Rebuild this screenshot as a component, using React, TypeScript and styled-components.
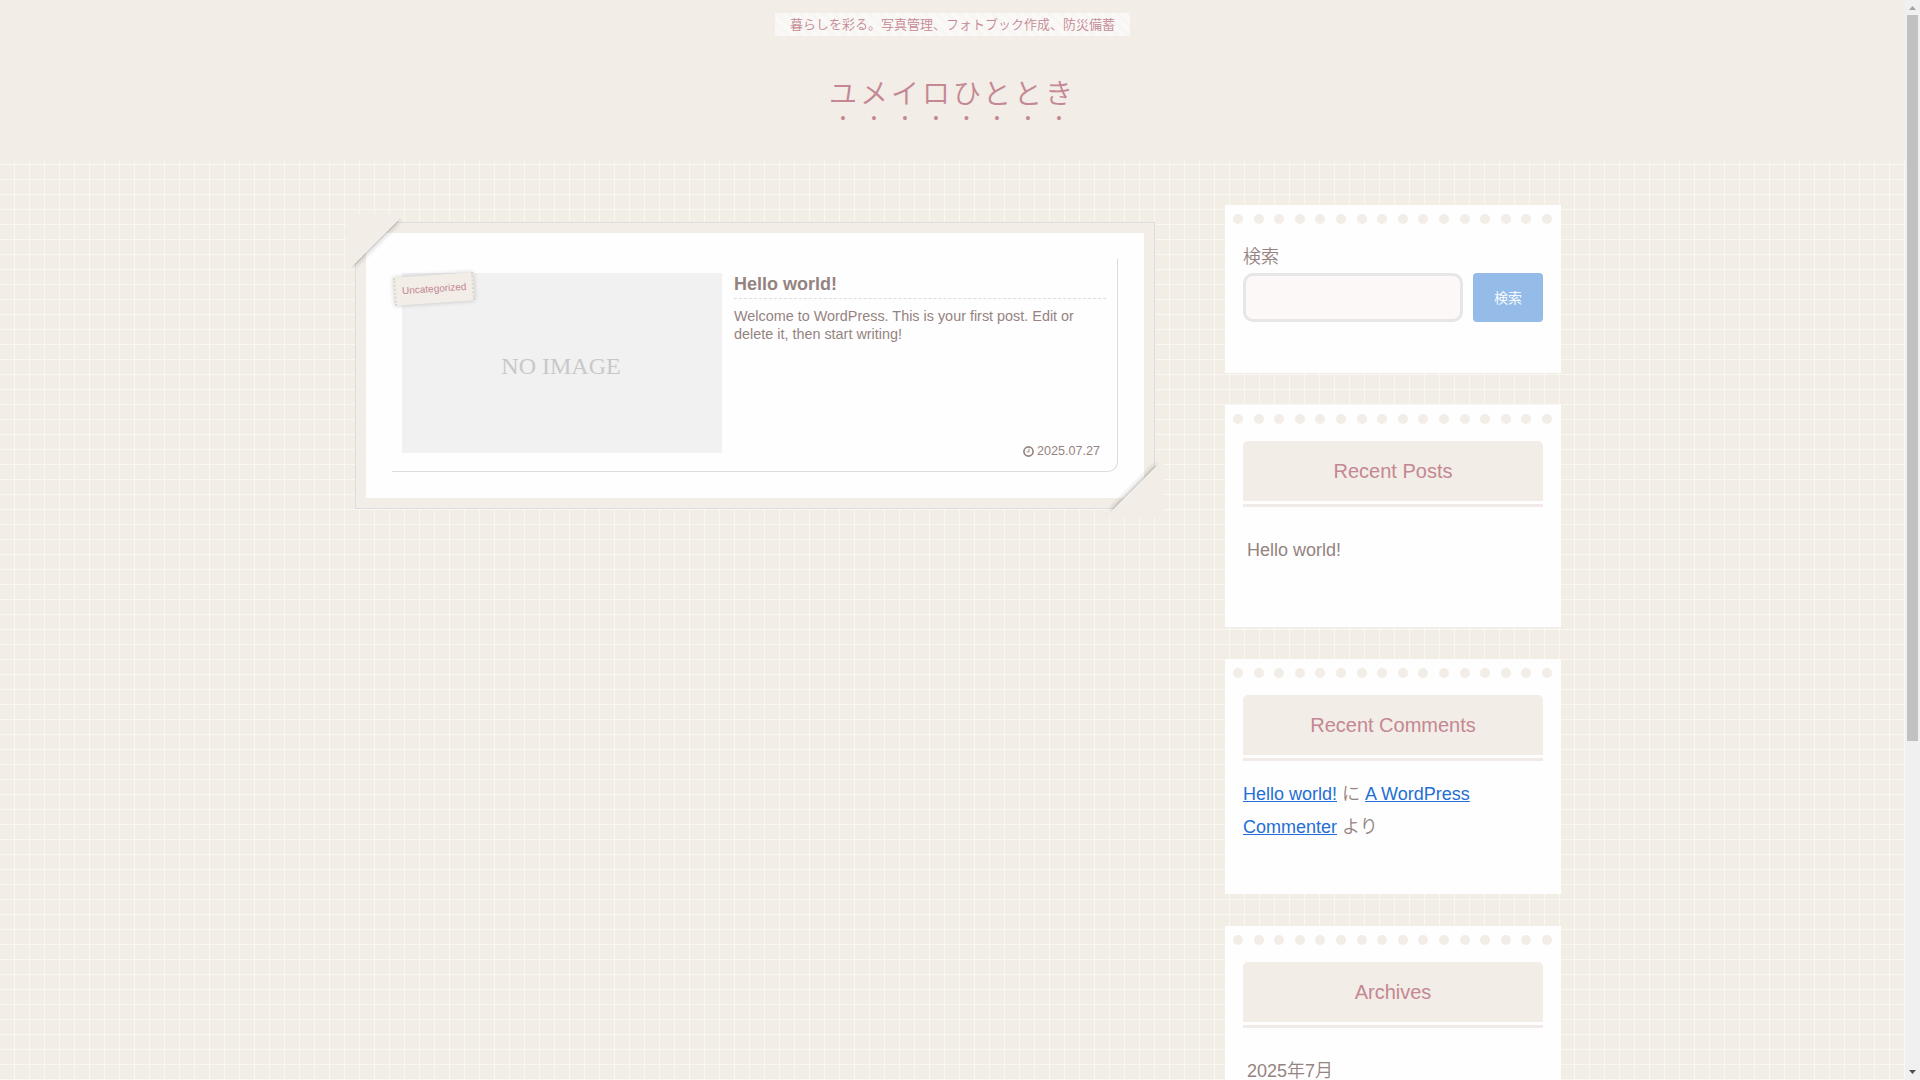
import React from "react";
import styled, { createGlobalStyle } from "styled-components";

const cream = "#f2ede6";
const rose = "#c48793";
const taupe = "#958380";
const line = "#dddddd";

const Global = createGlobalStyle`
  *, *::before, *::after { box-sizing: border-box; }
  body {
    margin: 0;
    color: ${taupe};
    font-family: "Liberation Sans", "Noto Sans CJK JP", sans-serif;
    font-size: 18px;
    font-weight: 350;
    line-height: 33px;
  }
  h1, h2, p, ul { margin: 0; padding: 0; }
  ul { list-style: none; }
`;

const Shell = styled.div`
  display: flex;
  height: 100vh;
  overflow: hidden;
`;

const Page = styled.div`
  flex: 1;
  min-width: 0;
  overflow: hidden;
  background-color: #f2ede5;
  background-image:
    linear-gradient(to right, transparent 14px, #f9f7f4 14px),
    linear-gradient(to bottom, transparent 14px, #f9f7f4 14px);
  background-size: 15px 15px;
`;

const Header = styled.header`
  display: flex;
  flex-direction: column;
  align-items: center;
  padding: 13px 0 35px;
  background: ${cream};
`;

const Tagline = styled.p`
  padding: 0 15px;
  font-size: 13px;
  line-height: 23px;
  color: ${rose};
  background: repeating-linear-gradient(45deg, #f8f6f3 0 4px, #faf9f8 4px 8px);
`;

const SiteName = styled.h1`
  margin-top: 32px;
  font-size: 28px;
  font-weight: 350;
  line-height: 54px;
  letter-spacing: 3px;
  a {
    color: ${rose};
    text-decoration: none;
    text-emphasis: filled dot;
    text-emphasis-position: under right;
  }
`;

const Content = styled.div`
  display: grid;
  grid-template-columns: minmax(0, 1fr) 336px;
  gap: 70px;
  align-items: start;
  max-width: 1217px;
  margin: 0 auto;
  padding: 44px 0;
`;

const Main = styled.main`
  padding: 17px 0 0 11px;
`;

const Frame = styled.div`
  position: relative;
  padding: 10px;
  border: 1px solid ${line};
  background: ${cream};
`;

const Corner = styled.span<{ $end?: boolean }>`
  position: absolute;
  width: 57px;
  height: 57px;
  ${(p) => (p.$end ? "right: -9px; bottom: -9px;" : "left: -9px; top: -9px;")}
  background: linear-gradient(${(p) => (p.$end ? "315deg" : "135deg")}, ${cream} 50%, transparent 50%);
  &::after {
    content: "";
    position: absolute;
    inset: 0;
    background: linear-gradient(
      ${(p) => (p.$end ? "315deg" : "135deg")},
      transparent 50%,
      rgba(0, 0, 0, 0.24) 50%,
      rgba(0, 0, 0, 0.08) 53%,
      transparent 58%
    );
    mask-image: linear-gradient(45deg, transparent 6%, #000 16%, #000 84%, transparent 94%);
  }
`;

const Sheet = styled.div`
  padding: 26px;
  background: #fefefe;
`;

const Entry = styled.article`
  display: grid;
  grid-template-columns: 320px minmax(0, 1fr);
  gap: 12px;
  padding: 14px 11px 18px 10px;
  border: solid ${line};
  border-width: 0 1px 1px 0;
  border-radius: 0 0 10px 0;
`;

const Thumb = styled.div`
  position: relative;
  display: flex;
  align-items: center;
  justify-content: center;
  aspect-ratio: 16 / 9;
  padding: 6px 2px 0 0;
  background: #f1f1f1;
  color: #c8c8ca;
  font: 24px/30px "Liberation Serif", serif;
`;

const Category = styled.span`
  position: absolute;
  left: -8px;
  top: 2px;
  padding: 0 6px;
  border: dotted #dcd6cf;
  border-width: 0 2px;
  background: ${cream};
  color: ${rose};
  font: 10px/28px "Liberation Sans", sans-serif;
  transform: rotate(-4deg);
  box-shadow: 0 0 5px rgba(0, 0, 0, 0.2);
`;

const Body = styled.div`
  display: flex;
  flex-direction: column;
`;

const EntryTitle = styled.h2`
  margin-bottom: 8px;
  padding-bottom: 3px;
  border-bottom: 1px dashed ${line};
  font-size: 18px;
  line-height: 22px;
  a { color: inherit; text-decoration: none; }
`;

const Excerpt = styled.p`
  font-size: 0.8em;
  line-height: 18px;
`;

const Meta = styled.div`
  display: flex;
  align-items: center;
  justify-content: flex-end;
  gap: 3px;
  margin-top: auto;
  padding-right: 6px;
  margin-bottom: -6px;
  font-size: 0.7em;
  line-height: 16px;
`;

const Sidebar = styled.aside`
  display: grid;
  grid-template-columns: minmax(0, 1fr);
  gap: 32px;
`;

const Card = styled.section<{ $end: number }>`
  padding: 9px 18px ${(p) => p.$end}px;
  background: #fefefe;
`;

const Dots = styled.div`
  display: flex;
  justify-content: space-between;
  margin: 0 -9px 17px -10px;
  span {
    width: 10px;
    height: 10px;
    border-radius: 50%;
    background: ${cream};
  }
`;

const CardTitle = styled.h2`
  border-bottom: 3px solid #f1eae7;
  padding-bottom: 3px;
  font-size: 20px;
  font-weight: 400;
  line-height: 60px;
  text-align: center;
  color: ${rose};
  span {
    display: block;
    border-radius: 5px 5px 0 0;
    background: ${cream};
  }
`;

const LinkList = styled.ul`
  padding: 27px 4px 0;
  a { color: inherit; text-decoration: none; }
`;

const Comment = styled.p`
  padding-top: 17px;
  a { color: #246ed5; }
`;

const SearchForm = styled.form`
  label { display: block; line-height: 32px; }
`;

const SearchRow = styled.div`
  display: flex;
  gap: 10px;
  height: 49px;
`;

const SearchInput = styled.input`
  flex: 1;
  min-width: 0;
  border: 3px solid #e6e6e6;
  border-radius: 10px;
  background: #fcf8f7;
  padding: 0 10px;
  font-size: 18px;
`;

const SearchButton = styled.button`
  width: 70px;
  padding: 0 0 2px;
  border: 0;
  border-radius: 4px;
  background: #95bce9;
  color: #fff;
  font: 350 14px "Liberation Sans", "Noto Sans CJK JP", sans-serif;
`;

const Track = styled.div`
  display: flex;
  flex-direction: column;
  align-items: center;
  width: 15px;
  background: #f0f0f0;
`;

const Arrow = styled.svg`
  flex: none;
  width: 15px;
  height: 15px;
`;

const ThumbBar = styled.div`
  width: 11px;
  height: 67.2%;
  margin-bottom: auto;
  background: #c1c1c1;
`;

const DotRow = () => (
  <Dots aria-hidden="true">
    {Array.from({ length: 16 }, (_, i) => <span key={i} />)}
  </Dots>
);

function Widget({ title, end, children }: { title?: string; end: number; children?: React.ReactNode }) {
  return (
    <Card $end={end}>
      <DotRow />
      {title && <CardTitle><span>{title}</span></CardTitle>}
      {children}
    </Card>
  );
}

export default function App() {
  return (
    <Shell lang="ja">
      <Global />
      <Page>
        <Header>
          <Tagline>暮らしを彩る。写真管理、フォトブック作成、防災備蓄</Tagline>
          <SiteName><a href="#">ユメイロひととき</a></SiteName>
        </Header>
        <Content>
          <Main>
            <Frame>
              <Sheet>
                <Entry>
                  <Thumb>
                    NO IMAGE
                    <Category>Uncategorized</Category>
                  </Thumb>
                  <Body>
                    <EntryTitle><a href="#">Hello world!</a></EntryTitle>
                    <Excerpt>Welcome to WordPress. This is your first post. Edit or delete it, then start writing!</Excerpt>
                    <Meta>
                      <svg width="11" height="11" viewBox="0 0 12 12" fill="none" stroke="currentColor" aria-hidden="true">
                        <circle cx="6" cy="6" r="5" strokeWidth="1.8" />
                        <path d="M6.5 3v3.500H4" strokeWidth="1" />
                      </svg>
                      <time dateTime="2025-07-27">2025.07.27</time>
                    </Meta>
                  </Body>
                </Entry>
              </Sheet>
              <Corner />
              <Corner $end />
            </Frame>
          </Main>
          <Sidebar>
            <Widget end={51}>
              <SearchForm>
                <label htmlFor="search">検索</label>
                <SearchRow>
                  <SearchInput id="search" type="search" />
                  <SearchButton type="button">検索</SearchButton>
                </SearchRow>
              </SearchForm>
            </Widget>
            <Widget title="Recent Posts" end={60}>
              <LinkList><li><a href="#">Hello world!</a></li></LinkList>
            </Widget>
            <Widget title="Recent Comments" end={50}>
              <Comment>
                <a href="#">Hello world!</a> に <a href="#">A WordPress Commenter</a> より
              </Comment>
            </Widget>
            <Widget title="Archives" end={60}>
              <LinkList><li><a href="#">2025年7月</a></li></LinkList>
            </Widget>
          </Sidebar>
        </Content>
      </Page>
      <Track aria-hidden="true">
        <Arrow viewBox="0 0 15 15"><path d="M4 10h7L7.500 6z" fill="#a3a3a3" /></Arrow>
        <ThumbBar />
        <Arrow viewBox="0 0 15 15"><path d="M4 5h7L7.500 9z" fill="#505050" /></Arrow>
      </Track>
    </Shell>
  );
}
